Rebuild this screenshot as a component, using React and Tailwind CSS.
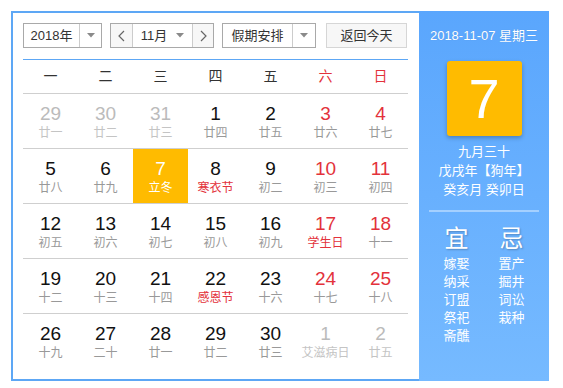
import React from 'react';

const FONT = { fontFamily: '"Liberation Sans", Arial, "Noto Sans CJK SC", sans-serif' };

const weekDays = ['一', '二', '三', '四', '五', '六', '日'];

// kind: 'other' = outside current month, 'today', otherwise normal
const weeks = [
    [['29', '廿一', 'other'], ['30', '廿二', 'other'], ['31', '廿三', 'other'], ['1', '廿四'], ['2', '廿五'], ['3', '廿六'], ['4', '廿七']],
    [['5', '廿八'], ['6', '廿九'], ['7', '立冬', 'today'], ['8', '寒衣节', 'fest'], ['9', '初二'], ['10', '初三'], ['11', '初四']],
    [['12', '初五'], ['13', '初六'], ['14', '初七'], ['15', '初八'], ['16', '初九'], ['17', '学生日', 'fest'], ['18', '十一']],
    [['19', '十二'], ['20', '十三'], ['21', '十四'], ['22', '感恩节', 'fest'], ['23', '十六'], ['24', '十七'], ['25', '十八']],
    [['26', '十九'], ['27', '二十'], ['28', '廿一'], ['29', '廿二'], ['30', '廿三'], ['1', '艾滋病日', 'other'], ['2', '廿五', 'other']],
];

const yi = ['嫁娶', '纳采', '订盟', '祭祀', '斋醮'];
const ji = ['置产', '掘井', '词讼', '栽种'];

function Caret() {
    return (
        <svg width="8" height="5" viewBox="0 0 8 5">
            <path d="M0 0 L8 0 L4 4.5 Z" fill="#8a8a8a" />
        </svg>
    );
}

function Chevron({ dir }) {
    return (
        <svg width="7" height="12" viewBox="0 0 7 12">
            <polyline
                points={dir === 'left' ? '6,1 1,6 6,11' : '1,1 6,6 1,11'}
                fill="none"
                stroke="#666"
                strokeWidth="1.2"
            />
        </svg>
    );
}

function DayCell({ day, idx }) {
    const [num, lunar, kind] = day;
    const weekend = idx >= 5;
    if (kind === 'today') {
        return (
            <div className="h-[54px] bg-[#ffbb00] flex flex-col items-center pt-[9px]">
                <span className="text-[19px] leading-[21px] text-white">{num}</span>
                <span className="text-[12px] leading-[15px] text-white mt-[2px]">{lunar}</span>
            </div>
        );
    }
    let numColor = 'text-[#111]';
    let lunarColor = 'text-[#999]';
    if (kind === 'other') {
        numColor = 'text-[#bbb]';
        lunarColor = 'text-[#c4c4c4]';
    } else {
        if (weekend) numColor = 'text-[#e3323b]';
        if (kind === 'fest') lunarColor = 'text-[#e3323b]';
    }
    return (
        <div className="h-[54px] flex flex-col items-center pt-[9px]">
            <span className={`text-[19px] leading-[21px] ${numColor}`}>{num}</span>
            <span className={`text-[12px] leading-[15px] mt-[2px] whitespace-nowrap ${lunarColor}`}>{lunar}</span>
        </div>
    );
}

export default function App() {
    return (
        <div className="p-[11px] bg-white" style={FONT}>
            <div className="w-[538px] h-[370px] flex">
                {/* Calendar body */}
                <div className="w-[408px] border-2 border-r-0 border-[#5da7f5] pt-[10px] pl-[10px]">
                    {/* Toolbar */}
                    <div className="flex h-[25px] text-[13px] text-[#333]">
                        <div className="flex w-[79px] border border-[#a9a9a9]">
                            <div className="w-[55px] flex items-center justify-center">2018年</div>
                            <div className="flex-1 border-l border-[#ccc] flex items-center justify-center"><Caret /></div>
                        </div>
                        <div className="flex w-[104px] ml-[8px] border border-[#a9a9a9]">
                            <div className="w-[21px] flex items-center justify-center bg-[#f7f7f7]"><Chevron dir="left" /></div>
                            <div className="w-[61px] border-l border-r border-[#ccc] flex items-center justify-center gap-[9px]">
                                <span>11月</span><Caret />
                            </div>
                            <div className="flex-1 flex items-center justify-center bg-[#f7f7f7]"><Chevron dir="right" /></div>
                        </div>
                        <div className="flex w-[94px] ml-[8px] border border-[#a9a9a9]">
                            <div className="w-[69px] flex items-center justify-center">假期安排</div>
                            <div className="flex-1 border-l border-[#ccc] flex items-center justify-center"><Caret /></div>
                        </div>
                        <div className="w-[81px] ml-[10px] border border-[#d6d6d6] bg-[#f7f7f7] flex items-center justify-center">
                            返回今天
                        </div>
                    </div>

                    <div className="w-[385px] mt-[11px] border-t border-[#5da7f5]">
                        <div className="grid grid-cols-7 h-[34px] border-b border-[#cfcfcf] text-[14px]">
                            {weekDays.map((w, i) => (
                                <div key={w} className={`flex items-center justify-center ${i >= 5 ? 'text-[#e3323b]' : 'text-[#333]'}`}>
                                    {w}
                                </div>
                            ))}
                        </div>
                        {weeks.map((week, r) => (
                            <div key={r} className={`grid grid-cols-7 ${r < weeks.length - 1 ? 'border-b border-[#cfcfcf]' : ''}`}>
                                {week.map((d, i) => (
                                    <DayCell key={i} day={d} idx={i} />
                                ))}
                            </div>
                        ))}
                    </div>
                </div>

                {/* Side panel */}
                <div className="w-[130px] h-[370px] bg-gradient-to-b from-[#5aa6fd] to-[#76baff] text-white flex flex-col items-center">
                    <div className="mt-[17px] text-[13px] leading-[16px] [text-shadow:0_0_1px_rgba(0,0,0,0.15)]">2018-11-07 星期三</div>
                    <div className="mt-[17px] w-[75px] h-[75px] rounded-[3px] bg-[#ffbb00] shadow-[0_2px_4px_rgba(0,0,0,0.25)] flex items-center justify-center">
                        <span className="text-[56px] leading-none">7</span>
                    </div>
                    <div className="mt-[6px] text-[13px] leading-[19px] text-center">
                        <div>九月三十</div>
                        <div>戊戌年【狗年】</div>
                        <div>癸亥月 癸卯日</div>
                    </div>
                    <div className="mt-[11px] w-[110px] h-[2px] bg-[#a4d0ff]" />
                    <div className="mt-[13px] flex gap-[28px]">
                        <div className="w-[27px] flex flex-col items-center">
                            <span className="text-[24px] leading-[28px] [text-shadow:1px_1px_2px_rgba(0,0,0,0.25)]">宜</span>
                            <div className="mt-[2px] text-[13px] leading-[18px] text-center">
                                {yi.map(t => <div key={t}>{t}</div>)}
                            </div>
                        </div>
                        <div className="w-[27px] flex flex-col items-center">
                            <span className="text-[24px] leading-[28px] [text-shadow:1px_1px_2px_rgba(0,0,0,0.25)]">忌</span>
                            <div className="mt-[2px] text-[13px] leading-[18px] text-center">
                                {ji.map(t => <div key={t}>{t}</div>)}
                            </div>
                        </div>
                    </div>
                </div>
            </div>
        </div>
    );
}
